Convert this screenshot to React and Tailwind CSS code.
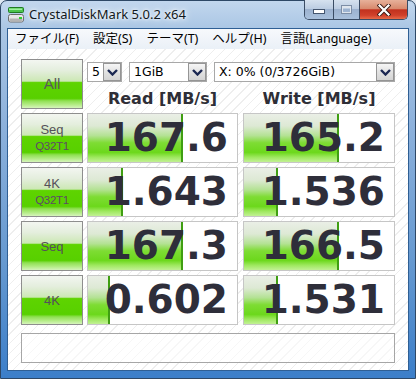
import React from "react";

const rows = [
  { l1: "Seq", l2: "Q32T1", r: "167.6", rw: 95, w: "165.2", ww: 95 },
  { l1: "4K", l2: "Q32T1", r: "1.643", rw: 35, w: "1.536", ww: 34 },
  { l1: "Seq", l2: null, r: "167.3", rw: 95, w: "166.5", ww: 95 },
  { l1: "4K", l2: null, r: "0.602", rw: 22, w: "1.531", ww: 34 },
];

function GreenBtn({ children }) {
  return (
    <div className="w-[62px] h-[50px] shrink-0 border border-[#8e8e8e] bg-[linear-gradient(to_bottom,#f3f6f1_0%,#e4eedd_22%,#cce8b4_44%,#5ed400_47%,#58d000_80%,#8fe052_85%,#b4ec86_93%,#d6f4bc_100%)] flex flex-col items-center justify-center font-['Liberation_Sans',sans-serif]">
      {children}
    </div>
  );
}

function Cell({ text, bar, wide }) {
  return (
    <div
      className={
        wide
          ? "relative w-[152px] h-[50px] border border-[#c6c6c6] bg-white overflow-hidden"
          : "relative w-[151px] h-[50px] border border-[#c6c6c6] bg-white overflow-hidden"
      }
    >
      <div
        className="absolute left-0 top-0 bottom-0 border-r-2 border-[#3f9e12] bg-[linear-gradient(to_bottom,#eaefe6_0%,#dde9d4_25%,#b4e294_45%,#7edc34_60%,#6cd81c_80%,#9ee85e_90%,#c2f194_100%)]"
        style={{ width: bar }}
      />
      <div className="relative text-right pr-[9px] leading-[48px] text-[39px] font-bold text-[#2e2e3a] font-['DejaVu_Sans',sans-serif]">
        {text}
      </div>
    </div>
  );
}

function Chevron() {
  return (
    <svg width="11" height="7" viewBox="0 0 11 7">
      <path d="M1 1 L5.5 5.5 L10 1" fill="none" stroke="#1b2752" strokeWidth="2.4" />
    </svg>
  );
}

function Select({ cls, text }) {
  return (
    <div className={cls}>
      <div className="flex-1 pl-[4px] text-[12.5px] leading-[18px] text-black font-['DejaVu_Sans',sans-serif] whitespace-nowrap overflow-hidden">
        {text}
      </div>
      <div className="w-[18px] border border-[#959595] bg-[linear-gradient(to_bottom,#f6f6f6,#e2e2e2_50%,#d4d4d4)] flex items-center justify-center">
        <Chevron />
      </div>
    </div>
  );
}

export default function App() {
  return (
    <div className="w-[416px] h-[379px] bg-[#dfe8f2] overflow-hidden">
      <div className="w-[416px] h-[379px] rounded-t-[7px] border border-[#2e4866] bg-[linear-gradient(to_bottom,#c2d7ee_0px,#aac6e4_28px,#8eb2dc_120px,#6699d0_260px,#3b7ec9_379px)] flex flex-col">
        {/* title bar */}
        <div className="h-[27px] flex items-start pl-[7px] pr-[7px]">
          <svg width="16" height="16" viewBox="0 0 16 16" className="mt-[6px] shrink-0">
            <rect x="0.5" y="0.5" width="15" height="5" rx="1" fill="#4cc44c" stroke="#1f7a22" />
            <rect x="1" y="1.5" width="13" height="1.5" fill="#9ff09f" />
            <rect x="0.5" y="7.5" width="15" height="7.5" rx="2" fill="#e8e8e8" stroke="#6c6c6c" />
            <rect x="1.5" y="11.5" width="13" height="3" fill="#b4b4b4" />
            <rect x="11" y="10" width="3" height="2" fill="#2fd02f" />
          </svg>
          <div className="ml-[5px] mt-[5px] text-[13px] leading-[17px] text-[#101820] font-['Noto_Sans',sans-serif] [text-shadow:0_0_6px_#ffffff,0_0_3px_#ffffff,0_0_10px_#e8f2fc]">
            CrystalDiskMark 5.0.2 x64
          </div>
          <div className="ml-auto flex h-[20px] -mt-[1px] rounded-b-[5px] border border-t-0 border-[#3a4c64] overflow-hidden">
            <div className="w-[29px] h-full border-r border-[#3a4c64] bg-[linear-gradient(to_bottom,#d6e2ef_0%,#bccde2_45%,#9cb2cf_50%,#a9c0dc_100%)] flex items-center justify-center">
              <div className="w-[10px] h-[3px] mt-[4px] bg-white border border-[#44556e] box-content" />
            </div>
            <div className="w-[26px] h-full border-r border-[#3a4c64] bg-[linear-gradient(to_bottom,#d6e2ef_0%,#bccde2_45%,#9cb2cf_50%,#a9c0dc_100%)] flex items-center justify-center">
              <div className="w-[9px] h-[7px] border border-[#dfe6ee] border-t-2 outline outline-1 outline-[#7d8ea6]" />
            </div>
            <div className="w-[47px] h-full bg-[linear-gradient(to_bottom,#e7b19a_0%,#d88a6e_45%,#c2321e_52%,#d0402a_80%,#e86a48_100%)] flex items-center justify-center">
              <svg width="14" height="12" viewBox="0 0 14 12">
                <path d="M2.5 1.5 L11.5 10.5 M11.5 1.5 L2.5 10.5" stroke="#3a1a14" strokeWidth="4" strokeLinecap="square" />
                <path d="M2.5 1.5 L11.5 10.5 M11.5 1.5 L2.5 10.5" stroke="#ffffff" strokeWidth="2.2" strokeLinecap="square" />
              </svg>
            </div>
          </div>
        </div>

        {/* client */}
        <div className="ml-[6px] w-[402px] h-[343px] border border-[#2f5f94] flex flex-col overflow-hidden">
          <div className="h-[20px] flex items-center bg-[linear-gradient(to_bottom,#f7f9fc,#eaf0f7)] text-[12.5px] leading-[20px] text-black font-['Noto_Sans','Noto_Sans_CJK_JP',sans-serif]">
            <span className="px-[7px]">ファイル(F)</span>
            <span className="px-[7px]">設定(S)</span>
            <span className="px-[7px]">テーマ(T)</span>
            <span className="px-[7px]">ヘルプ(H)</span>
            <span className="px-[7px]">言語(Language)</span>
          </div>
          <div className="flex-1 pl-[13px] pt-[10px] bg-[repeating-linear-gradient(135deg,#ffffff_0px,#ffffff_6px,#eeeeee_6px,#eeeeee_7px)]">
            {/* top row */}
            <div className="flex h-[50px]">
              <GreenBtn>
                <span className="text-[15px] leading-[18px] text-[#5a5a5a]">All</span>
              </GreenBtn>
              <div className="ml-[4px] flex flex-col">
                <div className="mt-[3px] h-[20px] flex gap-[7px]">
                  <Select cls="w-[35px] h-[20px] border border-[#a8a8a8] bg-white flex" text="5" />
                  <Select cls="w-[78px] h-[20px] border border-[#a8a8a8] bg-white flex" text="1GiB" />
                  <Select cls="w-[181px] h-[20px] border border-[#a8a8a8] bg-white flex" text="X: 0% (0/3726GiB)" />
                </div>
                <div className="mt-[6px] h-[21px] flex gap-[5px] text-[16px] leading-[21px] font-bold text-[#2e2e36] font-['DejaVu_Sans',sans-serif]">
                  <div className="w-[151px] text-center">Read [MB/s]</div>
                  <div className="w-[152px] text-center">Write [MB/s]</div>
                </div>
              </div>
            </div>

            <div className="mt-[4px] flex flex-col gap-[4px]">
              {rows.map((row, i) => (
                <div key={i} className="flex h-[50px]">
                  <GreenBtn>
                    <span className="text-[13px] leading-[17px] text-[#55505a]">{row.l1}</span>
                    {row.l2 && (
                      <span className="text-[11.5px] leading-[17px] tracking-[-0.3px] text-[#5e4a66]">{row.l2}</span>
                    )}
                  </GreenBtn>
                  <div className="ml-[4px]">
                    <Cell text={row.r} bar={row.rw} />
                  </div>
                  <div className="ml-[5px]">
                    <Cell text={row.w} bar={row.ww} wide />
                  </div>
                </div>
              ))}
            </div>

            <div className="mt-[8px] w-[374px] h-[30px] border border-[#a6a6a6] bg-white/50" />
          </div>
        </div>
      </div>
    </div>
  );
}
